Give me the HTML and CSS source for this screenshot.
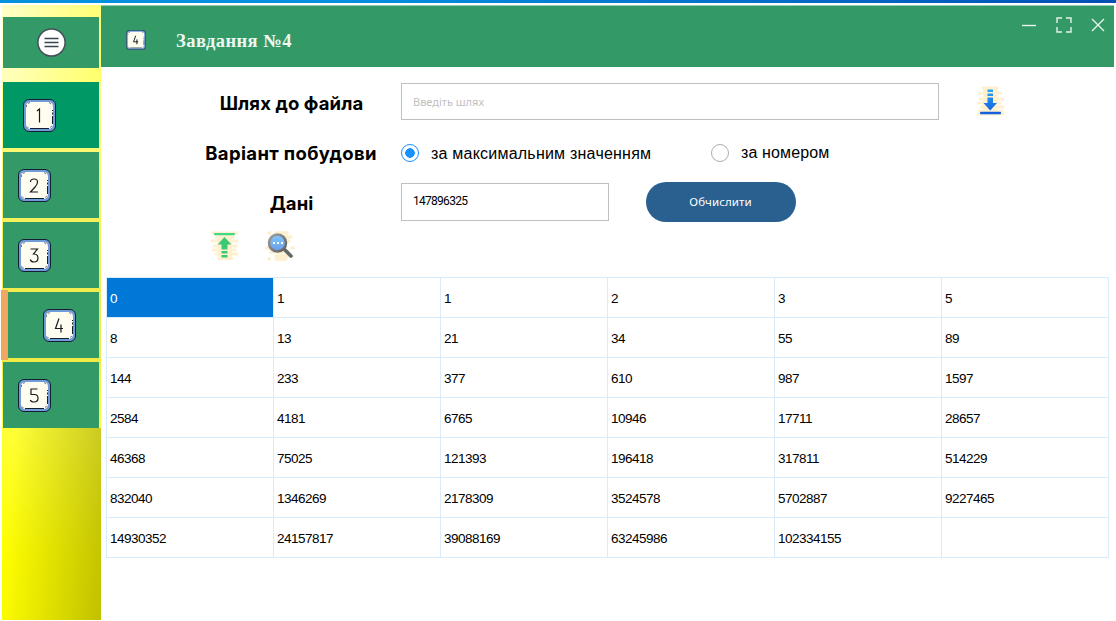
FILE: index.html
```
<!DOCTYPE html>
<html lang="uk">
<head>
<meta charset="utf-8">
<title>Завдання №4</title>
<link rel="stylesheet" href="styles.css">
</head>
<body>
<svg class="defs" width="0" height="0">
  <defs>
    <linearGradient id="blue" x1="0" y1="0" x2="0" y2="1"><stop offset="0" stop-color="#2aa6f0"/><stop offset="1" stop-color="#1467e0"/></linearGradient>
    <linearGradient id="glass" x1="0" y1="0" x2="0" y2="1"><stop offset="0" stop-color="#7cc8ff"/><stop offset="1" stop-color="#6c9de8"/></linearGradient>
    <linearGradient id="grey" x1="0" y1="0" x2="1" y2="1"><stop offset="0" stop-color="#a0a0a0"/><stop offset="1" stop-color="#606060"/></linearGradient>
    <symbol id="key" viewBox="0 0 33 33">
      <rect x=".5" y=".5" width="32" height="32" rx="5.500" fill="#709cda" stroke="#14202e"/>
      <rect x="3" y="3" width="27" height="27" rx="4.500" fill="#fffdf0"/>
      <path d="M7 29.500H26M29.500 25V17M29.500 15.500V13.500M29.500 12V11" fill="none" stroke="#14202e"/>
      <path d="M3.500 8V6M5 4.500L7 3.500M26 3.500L28 5M4 27.500L5.500 29M27 28.500L29 27" fill="none" stroke="#59636c" stroke-width=".8"/>
    </symbol>
  </defs>
</svg>
<div class="top-strip"></div>
<div class="window">
  <nav class="sidebar">
    <div class="menu">
      <svg width="29" height="29" viewBox="0 0 29 29"><circle cx="14.500" cy="14.500" r="13.600" fill="#fff" stroke="#47505a" stroke-width="1.500"/><path d="M7.500 10.500H21.500M7.500 14.500H21.500M7.500 18.500H21.500" stroke="#3b454e" stroke-width="1.500"/></svg>
    </div>
    <div class="tile hover"><span class="key"><svg><use href="#key"/></svg><svg class="digit" viewBox="0 0 33 33"><path d="M14 12L16.500 10V23.500"/></svg></span></div>
    <div class="tile"><span class="key"><svg><use href="#key"/></svg><svg class="digit" viewBox="0 0 33 33"><path d="M12.500 13Q12.500 10 16 10Q19.500 10 19.500 13Q19.500 15 17.500 17.500L12.500 23H20"/></svg></span></div>
    <div class="tile"><span class="key"><svg><use href="#key"/></svg><svg class="digit" viewBox="0 0 33 33"><path d="M12.500 10H19.500L15.500 15Q20 15 20 19Q20 23 16 23Q13 23 12.300 20.500"/></svg></span></div>
    <div class="tile active"><span class="key"><svg><use href="#key"/></svg><svg class="digit" viewBox="0 0 33 33"><path d="M16 9.500L12.500 19.500H20M18 15.500V23.500"/></svg></span></div>
    <div class="tile"><span class="key"><svg><use href="#key"/></svg><svg class="digit" viewBox="0 0 33 33"><path d="M19.500 10H13V15.500H16.500Q20 15.500 20 19.300Q20 23 16 23Q13 23 12.300 21"/></svg></span></div>
  </nav>
  <div class="page">
    <header class="header">
      <span class="key small"><svg><use href="#key"/></svg><svg class="digit" viewBox="0 0 33 33"><path d="M16 9.500L12.500 19.500H20M18 15.500V23.500"/></svg></span>
      <h1 class="title">Завдання №4</h1>
      <div class="controls">
        <svg width="16" height="16" viewBox="0 0 16 16"><path d="M1 8.500H15"/></svg>
        <svg width="16" height="16" viewBox="0 0 16 16"><path d="M1 6V1H6M10 1H15V6M15 10V15H10M6 15H1V10"/></svg>
        <svg width="16" height="16" viewBox="0 0 16 16"><path d="M2 2L14 14M14 2L2 14"/></svg>
      </div>
    </header>
    <main class="content">
      <div class="row path-row">
        <div class="label label-path">Шлях до файла</div>
        <div class="input wide"><span class="placeholder">Введіть шлях</span></div>
        <svg class="download" width="30" height="30" viewBox="0 0 30 30"><path d="M8 2H22M4 7H5M8 7H25M5 13H28M3 17H25M6 21H28M4 25H27M3 28H28" stroke="#fff0d0" stroke-width="3" stroke-linecap="round"/><path d="M8 3H22V26H8Z" fill="#fff0d0"/><path d="M12.500 3.500H18V6H12.500ZM12.500 7.500H18V10H12.500ZM12.500 11.500H18V17H22L15.200 24.500L8.500 17H12.500Z" fill="url(#blue)"/><rect x="5" y="25.800" width="21" height="2.500" rx=".8" fill="#1560dc"/></svg>
      </div>
      <div class="row variant-row">
        <div class="label label-variant">Варіант побудови</div>
        <span class="radio checked"></span><span class="option option-max">за максимальним значенням</span>
        <span class="radio"></span><span class="option option-number">за номером</span>
      </div>
      <div class="row data-row">
        <div class="label label-data">Дані</div>
        <div class="input short"><span class="value">147896325</span></div>
        <button class="calculate">Обчислити</button>
      </div>
      <div class="tools">
        <svg width="30" height="31" viewBox="0 0 30 31"><path d="M3 3H27M6 7H24M2 11H27M4 16H26M3 20H25M6 24H27M9 28.500H22" stroke="#fff0d0" stroke-width="3" stroke-linecap="round"/><path d="M8 3H22V27H8Z" fill="#fff0d0"/><rect x="4" y="3" width="21" height="2.300" rx="1" fill="#43d982"/><path d="M14.500 7L21.500 14.500H17.500V19.500H11.500V14.500H7.500ZM11.500 21H17.500V23.500H11.500ZM11.500 25H17.500V27.500H11.500Z" fill="#3bc976"/></svg>
        <svg width="30" height="31" viewBox="0 0 30 31"><path d="M4 3H5M11 3H22M8 7H26M5 11H24M6 15H20M2 18H18M27 18H28M6 22H23M11 26H24M4 29H4.500M11 29H21" stroke="#fcefd0" stroke-width="3.300" stroke-linecap="round"/><path d="M20 20L26 26" stroke="#666" stroke-width="3.600" stroke-linecap="round"/><circle cx="12.500" cy="13" r="8.500" fill="url(#glass)" stroke="url(#grey)" stroke-width="2.600"/><path d="M8 12H10V14H8ZM12 12H14V14H12ZM16 12H18V14H16Z" fill="#fff"/></svg>
      </div>
      <table class="grid">
        <tr><td class="selected">0</td><td>1</td><td>1</td><td>2</td><td>3</td><td>5</td></tr>
        <tr><td>8</td><td>13</td><td>21</td><td>34</td><td>55</td><td>89</td></tr>
        <tr><td>144</td><td>233</td><td>377</td><td>610</td><td>987</td><td>1597</td></tr>
        <tr><td>2584</td><td>4181</td><td>6765</td><td>10946</td><td>17711</td><td>28657</td></tr>
        <tr><td>46368</td><td>75025</td><td>121393</td><td>196418</td><td>317811</td><td>514229</td></tr>
        <tr><td>832040</td><td>1346269</td><td>2178309</td><td>3524578</td><td>5702887</td><td>9227465</td></tr>
        <tr><td>14930352</td><td>24157817</td><td>39088169</td><td>63245986</td><td>102334155</td><td></td></tr>
      </table>
    </main>
  </div>
</div>
</body>
</html>
```
FILE: styles.css
```
* { box-sizing: border-box; }
body { margin: 0; width: 1116px; height: 621px; overflow: hidden; background: #fff; color: #000; font-family: "Liberation Sans", Arial, sans-serif; }
svg { display: block; flex: none; }
.defs { position: absolute; }
.top-strip { height: 3px; margin-bottom: 2px; background: linear-gradient(90deg, #0790dc, #0590e0 30%, #0450b4); }
.window { display: flex; height: 615px; padding: 0 2px; }
.sidebar {
  width: 99px; flex: none; padding: 12px 2px 0 1px;
  background:
    linear-gradient(95deg, transparent 10%, rgba(125, 125, 0, .48) 100%) 0 100% / 100% 192px no-repeat,
    linear-gradient(100deg, #ffffc8 0, #ffff70 105px, #ffff68 100%) 0 0 / 100% 80px no-repeat,
    linear-gradient(180deg, #ffff88 80px, #f3ee50 250px, #eee946 350px, #ffff38 423px, #ffff00 550px);
}
.menu { height: 51px; margin-bottom: 14px; padding: 11px 0 0 34px; background: #339966; }
.tile { height: 66px; margin-bottom: 4px; padding: 17px 0 0 15px; background: #339966; }
.tile.hover { padding-left: 20px; background: #009966; }
.tile.active { height: 70px; margin: -2px 0 2px -2px; padding: 19px 0 0 35px; border-left: 7px solid #f0a860; background: linear-gradient(#339966, #339966) 0 2px / 100% 66px no-repeat; }
.key { display: grid; width: 33px; height: 33px; }
.key svg { grid-area: 1 / 1; width: 100%; height: 100%; }
.digit { fill: none; stroke: #171b20; stroke-width: 1.2; }
.key.small { width: 20px; height: 20px; }
.small .digit { stroke-width: 1.6; }
.page { flex: 1; min-width: 0; }
.header { display: flex; align-items: flex-start; height: 62px; padding: 24px 8px 0 25px; background: #339966; border-top: 1px solid #98ccb2; }
.title { margin: 0 auto 0 30px; color: #edf7ef; font: bold 18.500px/23px "Liberation Serif", "Times New Roman", serif; letter-spacing: .45px; }
.controls { display: flex; gap: 19px; margin-top: -13px; }
.controls svg:not(:last-child) { position: relative; left: 1px; }
.controls svg { fill: none; stroke: #e7f3ec; stroke-width: 1.4; }
.content { padding: 16px 0 0 5px; }
.row { display: flex; align-items: center; }
.label { width: 295px; padding: 2px 0 0 76px; flex: none; text-align: center; font: 700 18.500px/30px Inter, sans-serif; white-space: nowrap; letter-spacing: .1px; }
.label-variant { padding: 0 0 0 75px; letter-spacing: .35px; }
.path-row { height: 37px; }
.input { display: flex; align-items: center; height: 37px; padding-left: 11px; border: 1px solid #bfbfbf; font: 12px "Noto Sans", sans-serif; }
.wide { width: 538px; }
.placeholder { color: #bfbfbf; font-size: 11px; }
.download { margin: -2px 0 0 36px; }
.variant-row { height: 24px; margin-top: 21px; }
.radio { width: 18px; height: 18px; border: 1px solid #adadad; border-radius: 50%; flex: none; }
.radio.checked { border-color: #1890ff; background: radial-gradient(circle, #1890ff 4.5px, transparent 5px); }
.option { margin-left: 12px; font-size: 16px; white-space: nowrap; letter-spacing: .13px; }
.option-max { width: 280px; padding-top: 1px; letter-spacing: .22px; }
.data-row { height: 40px; margin-top: 17px; }
.short { width: 208px; height: 38px; }
.value { margin-top: -2px; font: 12px Roboto, sans-serif; letter-spacing: -.72px; }
.calculate { width: 150px; height: 40px; margin-left: 37px; padding: 0 1px 2px 0; border: 0; border-radius: 20px; background: #296090; color: #fff; font: 11.5px "Noto Sans", sans-serif; letter-spacing: .1px; }
.tools { display: flex; gap: 25px; height: 31px; margin: 8px 0 16px 104px; }
.grid { width: 1003px; table-layout: fixed; border-collapse: collapse; font-size: 13.5px; letter-spacing: -.5px; }
.grid td { height: 40px; padding: 2px 3px 0; border: 1px solid #d9ecfb; }
.grid .selected { background: #0078d7; color: #fff; }
```
